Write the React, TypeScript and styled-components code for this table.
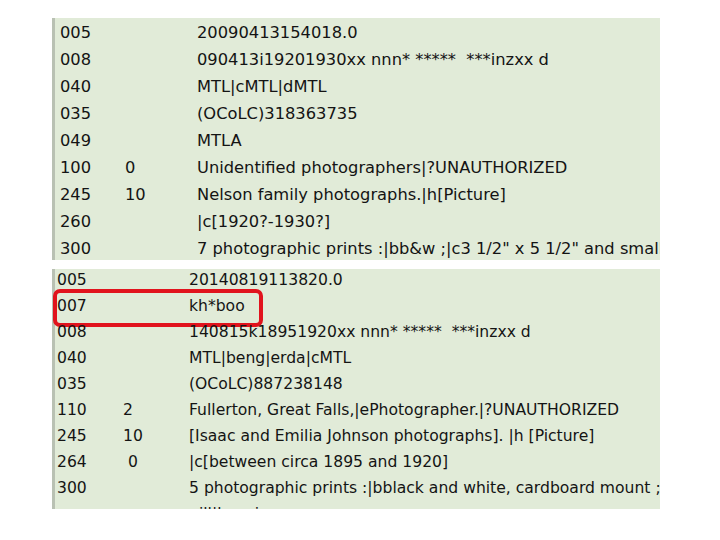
import React from 'react';
import styled, { createGlobalStyle } from 'styled-components';

interface Field {
  tag: string;
  ind?: string;
  value: string;
  marked?: boolean;
}

const GlobalStyle = createGlobalStyle`
  html, body {
    margin: 0;
    padding: 0;
    background: #ffffff;
  }
`;

const Page = styled.div`
  width: 720px;
  height: 540px;
  padding: 18px 0 0 52px;
  box-sizing: border-box;
  display: flex;
  flex-direction: column;
  gap: 9px;
  font-family: 'DejaVu Sans', Verdana, sans-serif;
  color: #141414;
`;

const Panel = styled.div<{ $height: number }>`
  width: 608px;
  height: ${(p) => p.$height}px;
  box-sizing: border-box;
  background: #e1ebd8;
  border-left: 3px solid #b9c1b3;
  overflow-x: visible;
  overflow-y: clip;
`;

const Row = styled.div<{
  $pitch: number;
  $shift: number;
  $size: number;
  $cols: string;
  $pad: number;
  $marked?: boolean;
}>`
  position: relative;
  display: grid;
  grid-template-columns: ${(p) => p.$cols};
  height: ${(p) => p.$pitch}px;
  line-height: ${(p) => p.$pitch + p.$shift}px;
  padding-left: ${(p) => p.$pad}px;
  font-size: ${(p) => p.$size}px;
  white-space: pre;

  &::after {
    content: '';
    display: ${(p) => (p.$marked ? 'block' : 'none')};
    position: absolute;
    left: -2px;
    top: -6px;
    width: 210px;
    height: 38px;
    box-sizing: border-box;
    border: 4px solid #e1131d;
    border-radius: 7px;
  }
`;

const Cell = styled.span`
  overflow: hidden;
`;

const top: Field[] = [
  { tag: '005', value: '20090413154018.0' },
  { tag: '008', value: '090413i19201930xx nnn* *****  ***inzxx d' },
  { tag: '040', value: 'MTL|cMTL|dMTL' },
  { tag: '035', value: '(OCoLC)318363735' },
  { tag: '049', value: 'MTLA' },
  { tag: '100', ind: '0', value: 'Unidentified photographers|?UNAUTHORIZED' },
  { tag: '245', ind: '10', value: 'Nelson family photographs.|h[Picture]' },
  { tag: '260', value: '|c[1920?-1930?]' },
  { tag: '300', value: '7 photographic prints :|bb&w ;|c3 1/2" x 5 1/2" and smaller' },
];

const bottom: Field[] = [
  { tag: '005', value: '20140819113820.0' },
  { tag: '007', value: 'kh*boo', marked: true },
  { tag: '008', value: '140815k18951920xx nnn* *****  ***inzxx d' },
  { tag: '040', value: 'MTL|beng|erda|cMTL' },
  { tag: '035', value: '(OCoLC)887238148' },
  { tag: '110', ind: '2', value: 'Fullerton, Great Falls,|ePhotographer.|?UNAUTHORIZED' },
  { tag: '245', ind: '10', value: '[Isaac and Emilia Johnson photographs]. |h [Picture]' },
  { tag: '264', ind: ' 0', value: '|c[between circa 1895 and 1920]' },
  { tag: '300', value: '5 photographic prints :|bblack and white, cardboard mount ;' },
  { tag: '', value: '  ill|bsepia' },
];

const Record: React.FC<{
  fields: Field[];
  height: number;
  pitch: number;
  shift: number;
  size: number;
  cols: string;
  pad: number;
}> = ({ fields, height, pitch, shift, size, cols, pad }) => (
  <Panel $height={height}>
    {fields.map((f, i) => (
      <Row
        key={i}
        $pitch={pitch}
        $shift={shift}
        $size={size}
        $cols={cols}
        $pad={pad}
        $marked={f.marked}
      >
        <Cell>{f.tag}</Cell>
        <Cell>{f.ind ?? ''}</Cell>
        <Cell>{f.value}</Cell>
      </Row>
    ))}
  </Panel>
);

export default function App() {
  return (
    <>
      <GlobalStyle />
      <Page>
        <Record
          fields={top}
          height={242}
          pitch={27}
          shift={2}
          size={16.3}
          cols="65px 72px 1fr"
          pad={5}
        />
        <Record
          fields={bottom}
          height={240}
          pitch={26}
          shift={-4}
          size={15.6}
          cols="66px 66px 1fr"
          pad={2}
        />
      </Page>
    </>
  );
}
